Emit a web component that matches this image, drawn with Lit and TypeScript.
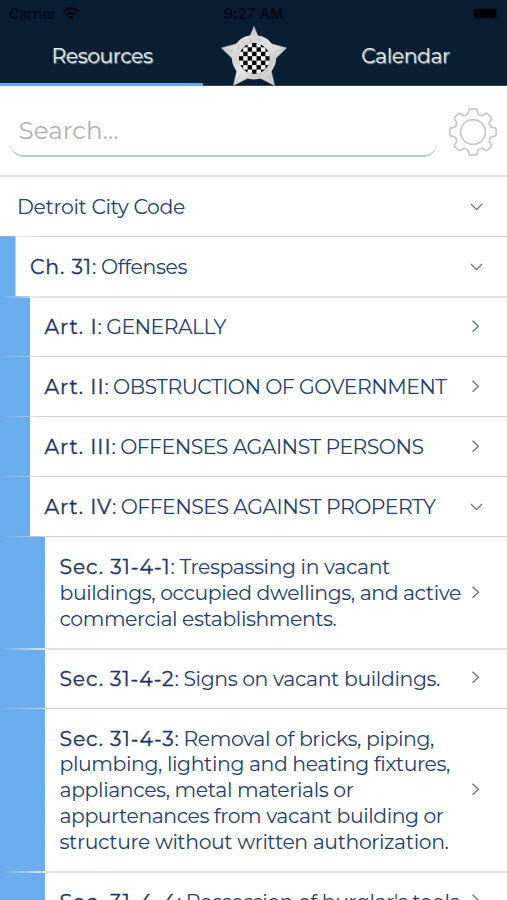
import { LitElement, html, css, svg } from "lit";
import { customElement, property } from "lit/decorators.js";

/* A single line of text whose tracking is adjusted to fill a given width. */
@customElement("fit-text")
class FitText extends LitElement {
  @property() text = "";
  @property({ type: Number }) width = 0;

  static styles = css`
    :host {
      display: inline-block;
      white-space: pre;
    }
    .t {
      display: inline-block;
    }
  `;

  render() {
    return html`<span class="t">${this.text}</span>`;
  }

  updated() {
    const el = this.renderRoot.querySelector(".t") as HTMLElement;
    el.style.letterSpacing = "0px";
    const natural = el.getBoundingClientRect().width;
    el.style.letterSpacing = `${(this.width - natural) / this.text.length}px`;
  }
}

type Line = [string, number];
interface Entry {
  level: number;
  label?: Line;
  lines: Line[];
  open?: boolean;
  soft?: boolean;
}

const entries: Entry[] = [
  { level: 0, lines: [["Detroit City Code", 168]], open: true, soft: true },
  { level: 1, label: ["Ch. 31", 62], lines: [[": Offenses", 95]], open: true },
  { level: 2, label: ["Art. I", 53], lines: [[": GENERALLY", 128.5]], soft: true },
  { level: 2, label: ["Art. II", 60], lines: [[": OBSTRUCTION OF GOVERNMENT", 342]] },
  { level: 2, label: ["Art. III", 67], lines: [[": OFFENSES AGAINST PERSONS", 312]] },
  { level: 2, label: ["Art. IV", 67.5], lines: [[": OFFENSES AGAINST PROPERTY", 323.5]], open: true },
  {
    level: 3,
    label: ["Sec. 31-4-1", 111],
    lines: [
      [": Trespassing in vacant", 219.5],
      ["buildings, occupied dwellings, and active", 401.5],
      ["commercial establishments.", 277],
    ],
  },
  { level: 3, label: ["Sec. 31-4-2", 115], lines: [[": Signs on vacant buildings.", 265.5]], soft: true },
  {
    level: 3,
    label: ["Sec. 31-4-3", 115],
    lines: [
      [": Removal of bricks, piping,", 259.5],
      ["plumbing, lighting and heating fixtures,", 390.5],
      ["appliances, metal materials or", 294],
      ["appurtenances from vacant building or", 384],
      ["structure without written authorization.", 389],
    ],
  },
  {
    level: 3,
    label: ["Sec. 31-4-4", 117.5],
    lines: [[": Possession of burglar's tools", 282]],
    soft: true,
  },
];

type Pt = [number, number];

function polar(r: number, deg: number): Pt {
  const a = (deg * Math.PI) / 180;
  return [r * Math.sin(a), -r * Math.cos(a)];
}

/* Closed polygon with every corner rounded by up to `r`. */
function rounded(points: Pt[], r: number): string {
  const n = points.length;
  let d = "";
  points.forEach((p, i) => {
    const toward = (q: Pt): Pt => {
      const len = Math.hypot(q[0] - p[0], q[1] - p[1]);
      const t = Math.min(r / len, 0.5);
      return [p[0] + (q[0] - p[0]) * t, p[1] + (q[1] - p[1]) * t];
    };
    const a = toward(points[(i + n - 1) % n]);
    const b = toward(points[(i + 1) % n]);
    d += `${i ? "L" : "M"}${a[0].toFixed(2)} ${a[1].toFixed(2)}Q${p[0].toFixed(2)} ${p[1].toFixed(2)} ${b[0].toFixed(2)} ${b[1].toFixed(2)}`;
  });
  return d + "Z";
}

const gearPoints: Pt[] = [];
for (let k = 0; k < 8; k++) {
  const c = k * 45;
  gearPoints.push(polar(18.4, c - 14), polar(23.6, c - 10.5), polar(23.6, c + 10.5), polar(18.4, c + 14));
}
const gearPath = rounded(gearPoints, 2.4);

const cell = 4.45;
const checks: Pt[] = [];
for (let i = -4; i <= 4; i++)
  for (let j = -4; j <= 4; j++)
    if ((i + j) % 2 === 0) checks.push([i * cell - cell / 2, j * cell - cell / 2]);

@customElement("app-root")
class AppRoot extends LitElement {
  static styles = css`
    :host {
      display: flex;
      flex-direction: column;
      height: 900px;
      overflow: hidden;
      background: #fff;
      color: #223e69;
      font-family: Montserrat, Inter, "Liberation Sans", sans-serif;
    }
    .header {
      flex: none;
      height: 86px;
      box-sizing: border-box;
      display: grid;
      grid-template-rows: 26px 60px;
      background: #091d33;
    }
    .status {
      display: grid;
      grid-template-columns: 1fr auto 1fr;
      align-items: center;
      padding: 2px 11px 0 9px;
      font: 14.5px/20px Inter, "Liberation Sans", sans-serif;
      color: #020810;
    }
    .carrier {
      display: flex;
      align-items: center;
      gap: 6px;
    }
    .carrier svg {
      margin-bottom: 2px;
    }
    .clock {
      font-weight: 600;
      padding-left: 2px;
    }
    .battery {
      justify-self: end;
      width: 22px;
      height: 9px;
      margin-bottom: 2px;
      border-radius: 2px;
      background: #000;
      box-shadow: 0 0 2px #000;
    }
    .tabs {
      display: grid;
      grid-template-columns: 203px 101px 203px;
    }
    .tab {
      box-sizing: border-box;
      height: 60px;
      display: flex;
      align-items: center;
      justify-content: center;
      border-bottom: 1px solid #3a4450;
      font-size: 20.4px;
      line-height: 24px;
      color: #e6eaec;
      text-shadow: 1px 1px 1px #8f9899;
    }
    .tab.active {
      border-bottom: 3px solid #64aaec;
      padding-top: 3px;
      padding-left: 1px;
    }
    .badge {
      display: flex;
      justify-content: center;
      border-bottom: 1px solid #3a4450;
      height: 59px;
    }
    .search {
      flex: none;
      height: 89px;
      display: flex;
      align-items: flex-start;
      justify-content: space-between;
      padding: 0 9px 0 10px;
    }
    .field {
      width: 427px;
      height: 71px;
      box-sizing: border-box;
      display: flex;
      align-items: flex-end;
      padding: 0 0 8px 8.5px;
      border-radius: 0 0 14px 14px;
      border-bottom: 2.5px solid #c5c8c9;
      font-size: 24.5px;
      line-height: 34px;
      color: #b2b2b2;
    }
    .gear {
      margin-top: 21px;
    }
    .row {
      --strip: 0px;
      --line: 1px;
      --ink: #d0d1d2;
      flex: none;
      box-sizing: border-box;
      display: flex;
      align-items: center;
      justify-content: space-between;
      padding: 18px 23px 16.25px calc(var(--strip) + 14.5px);
      font-size: 20.4px;
      line-height: 25.75px;
      background:
        linear-gradient(90deg, transparent 2px, var(--ink) 44px) 0 0 / 100% var(--line) no-repeat,
        linear-gradient(#69adec, #69adec) 0 0 / var(--strip) 100% no-repeat,
        #fff;
    }
    .soft {
      --line: 2px;
      --ink: #e1e2e3;
    }
    .l0 {
      background: linear-gradient(var(--ink), var(--ink)) 0 0 / 100% var(--line) no-repeat;
      padding-left: 17px;
      padding-top: 19px;
    }
    .l1 {
      --strip: 15.5px;
    }
    .l2 {
      --strip: 30px;
    }
    .l3 {
      --strip: 45px;
    }
    .text {
      min-width: 0;
    }
    .line {
      white-space: nowrap;
      height: 25.75px;
    }
    .label {
      font-weight: 400;
      color: #1a3561;
      -webkit-text-stroke: 0.35px #1a3561;
    }
    .chev {
      flex: none;
      width: 16px;
      height: 16px;
      margin-left: -20px;
    }
  `;

  private star() {
    const pts: Pt[] = [
      [0, -31.5], [5, -19], [18, -14], [32.5, -10], [20, 2], [17, 12], [20.5, 27.5],
      [6, 20], [-6, 20], [-20.5, 27.5], [-17, 12], [-20, 2], [-32.5, -10], [-18, -14], [-5, -19],
    ];
    return html`<svg width="66" height="60" viewBox="-33 -32 66 60">
      <defs>
        <linearGradient id="metal" x1="0" y1="0" x2="1" y2="1">
          <stop offset="0" stop-color="#f0f0f0" />
          <stop offset=".3" stop-color="#d2d2d2" />
          <stop offset=".5" stop-color="#e8e8e8" />
          <stop offset=".75" stop-color="#cacaca" />
          <stop offset="1" stop-color="#ededed" />
        </linearGradient>
        <clipPath id="disc"><circle r="15.5" /></clipPath>
      </defs>
      <polygon points=${pts.map((p) => p.join(",")).join(" ")} fill="url(#metal)" stroke="#c4c4c4" stroke-width=".6" stroke-linejoin="round" />
      <path d="M0-31V-20M-32-10L-20-6M32-10L20-6M-20 27L-13 16M20 27L13 16" stroke="#b0b0b0" stroke-width=".8" />
      <circle cy="-.8" r="22.3" fill="url(#metal)" />
      <path d="M-17-8L-14-14M-12-17L-8-12M-4-20L-3-15M5-20L6-16M12-16L10-13" stroke="#bdbdbd" stroke-width="1" />
      <g transform="translate(.3 .4)" clip-path="url(#disc)">
        <circle r="15.6" fill="#050505" />
        ${checks.map((c) => svg`<rect x=${c[0]} y=${c[1]} width=${cell} height=${cell} fill="#f7f7f7" />`)}
      </g>
    </svg>`;
  }

  private row(e: Entry) {
    return html`<div class="row l${e.level} ${e.soft ? "soft" : ""}">
      <div class="text">
        ${e.lines.map(
          (l, i) => html`<div class="line">${i === 0 && e.label
            ? html`<fit-text class="label" .text=${e.label[0]} .width=${e.label[1]}></fit-text>`
            : ""}<fit-text .text=${l[0]} .width=${l[1]}></fit-text></div>`
        )}
      </div>
      <svg class="chev" viewBox="0 0 16 16" fill="none" stroke="#66718c" stroke-width="1.3">
        <path d=${e.open ? "M3 5L8.5 10.6L14 5" : "M4.5 1.7L10.4 7.2L4.5 12.7"} />
      </svg>
    </div>`;
  }

  render() {
    return html`
      <div class="header">
        <div class="status">
          <div class="carrier">
            <fit-text .text=${"Carrier"} .width=${47}></fit-text>
            <svg width="18" height="13" viewBox="0 0 18 13" fill="none" stroke="#020810" stroke-width="2.3">
              <path d="M1 4.6Q9-2 17 4.6M4 8Q9 3.8 14 8" />
              <path d="M9 12.6L6 9.7Q9 7.6 12 9.7Z" fill="#020810" stroke="none" />
            </svg>
          </div>
          <fit-text class="clock" .text=${"9:27 AM"} .width=${60}></fit-text>
          <div class="battery"></div>
        </div>
        <div class="tabs">
          <div class="tab active"><fit-text .text=${"Resources"} .width=${101}></fit-text></div>
          <div class="badge">${this.star()}</div>
          <div class="tab"><fit-text .text=${"Calendar"} .width=${88.5}></fit-text></div>
        </div>
      </div>
      <div class="search">
        <div class="field"><fit-text .text=${"Search..."} .width=${100}></fit-text></div>
        <svg class="gear" width="50" height="50" viewBox="-25 -25 50 50" fill="none" stroke="#c6c6c6" stroke-width="1.7">
          <path d=${gearPath} />
          <circle r="12.4" />
        </svg>
      </div>
      ${entries.map((e) => this.row(e))}
    `;
  }
}
